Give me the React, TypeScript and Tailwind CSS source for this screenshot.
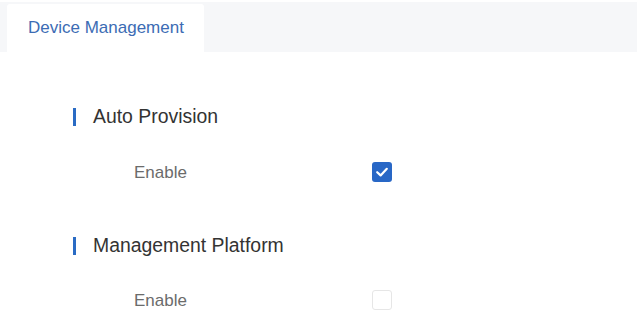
import React from "react";

function Checked() {
  return (
    <div className="w-[20px] h-[20px] rounded-[3px] bg-[#2867c6] flex items-center justify-center">
      <svg width="16" height="16" viewBox="0 0 16 16" fill="none">
        <path d="M3.2 8.2 L6.6 11.4 L12.8 4.8" stroke="white" strokeWidth="2.2" strokeLinecap="round" strokeLinejoin="round" />
      </svg>
    </div>
  );
}

function Unchecked() {
  return <div className="w-[20px] h-[20px] rounded-[3px] border border-[#e6e6e6] bg-white" />;
}

function SectionTitle({ text }: { text: string }) {
  return (
    <div className="flex items-center h-[30px] pl-[73px]">
      <div className="w-[3px] h-[18px] bg-[#2a6bc4]" />
      <span className="ml-[17px] text-[19.4px] text-[#333333] leading-none">{text}</span>
    </div>
  );
}

function Row({ checked }: { checked: boolean }) {
  return (
    <div className="flex items-center h-[30px] pl-[134px]">
      <span className="w-[238px] text-[17px] text-[#6b6b6b] leading-none">Enable</span>
      {checked ? <Checked /> : <Unchecked />}
    </div>
  );
}

export default function App() {
  return (
    <div className="w-[638px] h-[332px] bg-white overflow-hidden" style={{ fontFamily: '"Liberation Sans", Arial, sans-serif' }}>
      <div className="mt-[2px] h-[50px] w-[637px] bg-[#f6f7f9] flex items-end pl-[7px]">
        <div className="h-[48px] w-[197px] bg-white rounded-t-[3px] flex items-center pl-[21px] pb-[1px]">
          <span className="text-[17px] text-[#3c6cb4] leading-none">Device Management</span>
        </div>
      </div>
      <div className="flex flex-col pt-[50px]">
        <SectionTitle text="Auto Provision" />
        <div className="mt-[25px]">
          <Row checked={true} />
        </div>
        <div className="mt-[44px]">
          <SectionTitle text="Management Platform" />
        </div>
        <div className="mt-[24px]">
          <Row checked={false} />
        </div>
      </div>
    </div>
  );
}
